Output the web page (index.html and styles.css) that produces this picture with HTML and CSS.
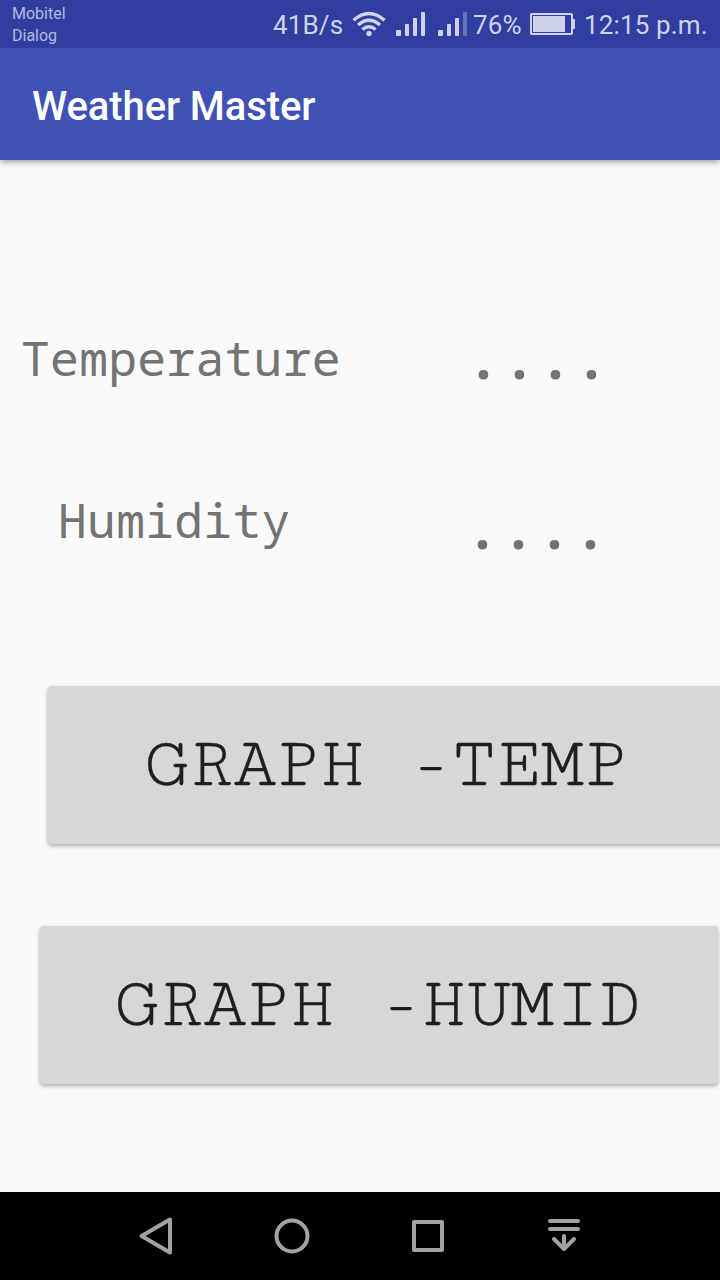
FILE: index.html
```html
<!DOCTYPE html>
<html lang="en">
<head>
<meta charset="utf-8">
<title>Weather Master</title>
<link rel="stylesheet" href="styles.css">
</head>
<body>
<div class="screen">
  <header class="status">
    <div class="carriers"><span>Mobitel</span><span>Dialog</span></div>
    <div class="indicators">
      <span class="speed">41B/s</span>
      <svg class="wifi" width="34" height="26" viewBox="0 0 34 26" fill="none" stroke="#cfd2eb" stroke-width="3.4">
        <path d="M1.5 9.3Q17 -4.5 32.5 9.3M6 14.1Q17 4.3 28 14.1M10.4 18.6Q17 12.7 23.6 18.6"/>
        <circle cx="17" cy="22.5" r="2.7" fill="#cfd2eb" stroke="none"/>
      </svg>
      <svg class="signal" width="30" height="24" viewBox="0 0 30 24" fill="#cfd2eb">
        <rect y="18" width="5" height="6" rx="1"/><rect x="9" y="12" width="4" height="12" rx="1"/><rect x="17" y="6" width="4" height="18" rx="1"/><rect x="25" width="4" height="24" rx="1"/>
      </svg>
      <svg class="signal second" width="30" height="24" viewBox="0 0 30 24" fill="#cfd2eb">
        <rect y="18" width="5" height="6" rx="1"/><rect x="9" y="12" width="4" height="12" rx="1"/><rect x="17" y="6" width="4" height="18" rx="1"/><rect x="25" width="4" height="24" rx="1" opacity=".35"/>
      </svg>
      <span class="percent">76%</span>
      <svg class="battery" width="45" height="22" viewBox="0 0 45 22" fill="#cfd2eb">
        <rect x="1" y="1" width="41" height="20" rx="1" fill="none" stroke="#cfd2eb" stroke-width="2"/>
        <rect x="3" y="3" width="32" height="16"/><rect x="42" y="6" width="3" height="10" rx="1"/>
      </svg>
      <span class="clock">12:15 p.m.</span>
    </div>
  </header>
  <div class="appbar"><h1>Weather Master</h1></div>
  <main>
    <div class="reading temperature"><span class="label">Temperature</span><span class="value">....</span></div>
    <div class="reading humidity"><span class="label">Humidity</span><span class="value">....</span></div>
    <button class="graph graph-temp">GRAPH -TEMP</button>
    <button class="graph graph-humid">GRAPH -HUMID</button>
  </main>
  <nav>
    <svg width="40" height="40" viewBox="0 0 40 40"><path d="M5.5 20 34 3.5v33Z"/></svg>
    <svg width="40" height="40" viewBox="0 0 40 40"><circle cx="20" cy="20" r="15.5"/></svg>
    <svg width="40" height="40" viewBox="0 0 40 40"><rect x="6" y="6" width="28" height="28"/></svg>
    <svg width="40" height="40" viewBox="0 0 40 40"><path d="M6 5H34M6 13H34M20 20V32M10 23 20 33 30 23"/></svg>
  </nav>
</div>
</body>
</html>
```
FILE: styles.css
```css
* { box-sizing: border-box; }
body { margin: 0; background: #fafafa; font-family: Roboto, sans-serif; }
.screen { width: 720px; height: 1280px; display: flex; flex-direction: column; overflow: hidden; }
.status { position: relative; z-index: 1; height: 48px; flex: none; display: flex; justify-content: space-between; padding: 0 12px; background: #303f9f; color: #cfd2eb; }
.carriers { display: flex; flex-direction: column; padding-top: 3px; font-size: 16px; line-height: 22px; color: #b4b9df; }
.indicators { display: flex; align-items: flex-start; font-size: 26px; line-height: 30px; padding-top: 10px; white-space: nowrap; letter-spacing: .15px; }
.speed { width: 79px; }
.wifi { margin-top: 1px; }
.signal { margin: 2px 0 0 10px; }
.second { margin-left: 12px; }
.percent { margin-left: 5px; width: 50px; }
.battery { margin: 3px 9px 0 7px; }
.clock { width: 124px; }
.appbar { height: 112px; flex: none; display: flex; align-items: center; padding: 6px 32px 0; background: #3f51b5; color: #fff; box-shadow: 0 2px 6px rgba(0,0,0,.38); }
h1 { margin: 0; font-size: 40px; font-weight: 500; line-height: 48px; letter-spacing: -.1px; }
main { flex: 1; display: flex; flex-direction: column; }
.reading { display: flex; align-items: flex-start; color: #737373; font-family: "Droid Sans Mono", "Noto Sans Mono", "DejaVu Sans Mono", monospace; }
.label { font-size: 48px; line-height: 60px; letter-spacing: .27px; }
.value { font-size: 60px; line-height: 72px; font-weight: 600; }
.temperature { margin: 160px 0 0 21px; height: 72px; }
.temperature .label { width: 444.5px; margin-top: 8px; }
.humidity { margin: 98px 0 0 58px; height: 72px; }
.humidity .label { width: 406.5px; }
.graph { flex: none; height: 158px; border: 0; border-radius: 4px; background: #d6d8d7; color: #1e1e1e; font: 72px/158px "Cutive Mono", "Courier Prime", FreeMono, "Liberation Mono", monospace; letter-spacing: .35px; -webkit-text-stroke: .3px #1e1e1e; text-align: left; white-space: nowrap; box-shadow: 0 2px 4px rgba(0,0,0,.32); }
.graph-temp { margin: 124px 0 0 48px; width: 690px; padding: 0 0 0 97px; }
.graph-humid { margin: 82px 0 0 40px; width: 678px; padding: 0 0 0 75px; }
nav { height: 88px; flex: none; display: flex; justify-content: center; align-items: center; gap: 96px; background: #000; }
nav svg { fill: none; stroke: #a3a3a3; stroke-width: 4; stroke-linecap: round; stroke-linejoin: round; }
```
